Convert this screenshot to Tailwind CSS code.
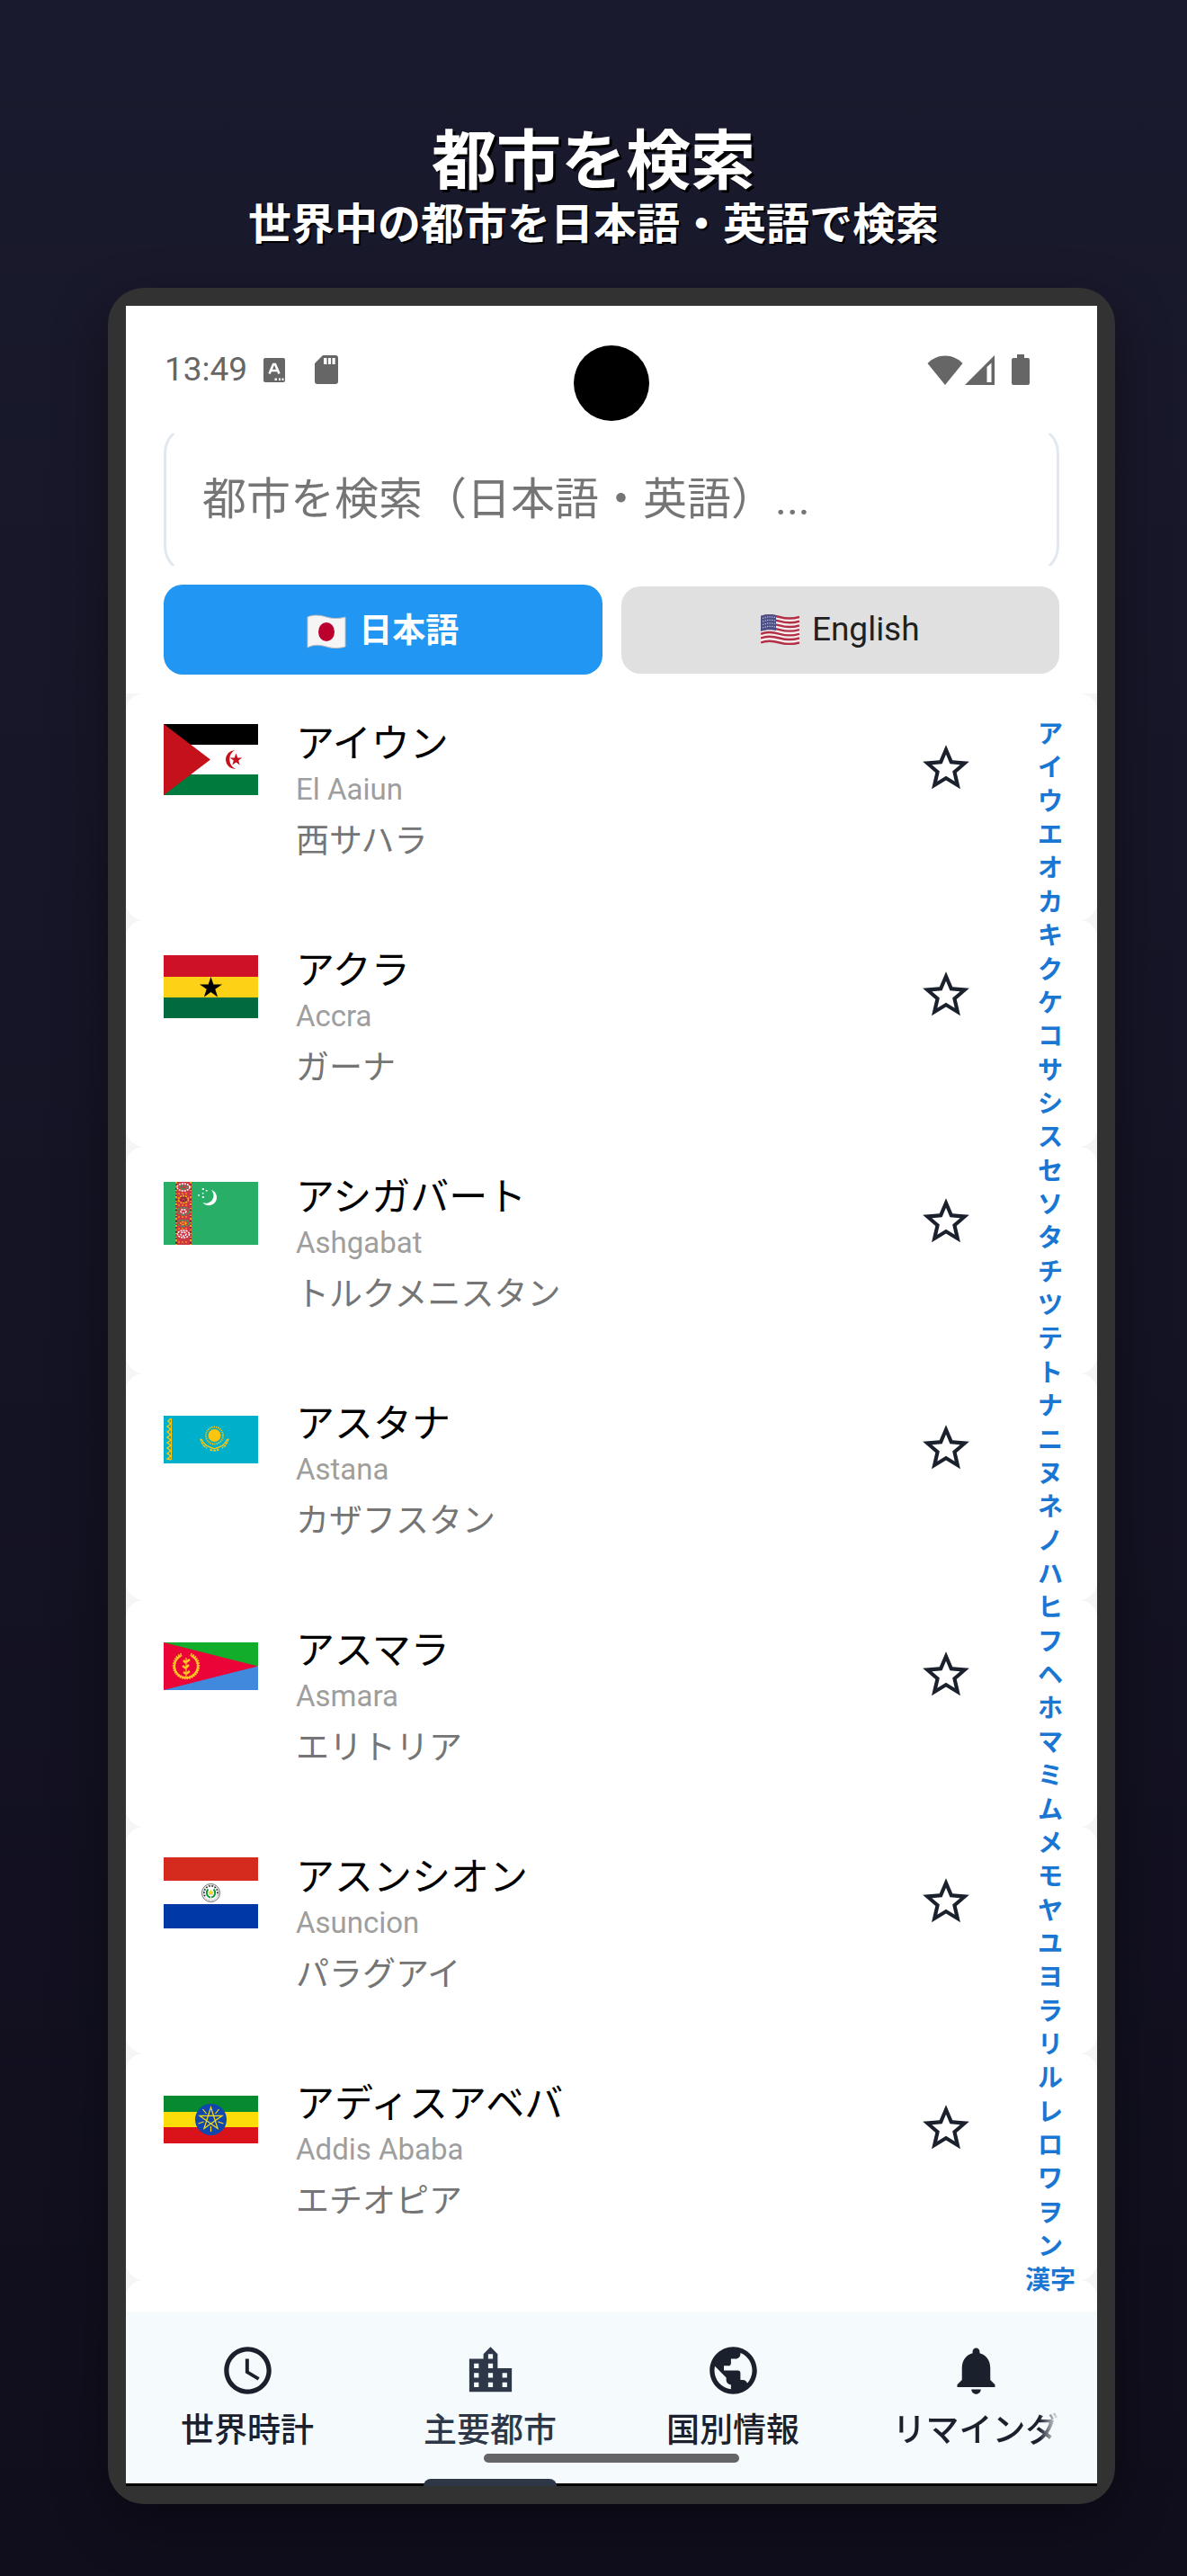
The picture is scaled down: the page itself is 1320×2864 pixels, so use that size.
<!DOCTYPE html>
<html lang="ja">
<head>
    <meta charset="UTF-8">
    <meta name="viewport" content="width=device-width, initial-scale=1.0">
    <title>都市を検索</title>
    <script src="https://cdn.jsdelivr.net/npm/@tailwindcss/browser@4"></script>
    <style>
        body {
            font-family: Roboto, 'Noto Sans CJK JP', sans-serif;
        }
    </style>
</head>
<body class="min-h-screen bg-linear-to-b from-[#1a1a2e] to-[#100e1c] pb-20">
    <header class="pt-[129px] text-center font-['Noto_Sans_CJK_JP',sans-serif] font-bold text-white">
        <h1 class="text-[72px] leading-[88px] [text-shadow:3px_3px_0_#000]">都市を検索</h1>
        <p class="text-5xl leading-[56px] [text-shadow:2px_2px_0_#000]">世界中の都市を日本語・英語で検索</p>
    </header>

    <!-- Phone -->
    <div class="mt-[47px] mr-20 ml-[120px] rounded-[40px] bg-[#323232] p-5 shadow-[0_20px_60px_rgba(0,0,0,0.4)]">
        <main class="relative bg-white">
            <!-- Status bar -->
            <div class="flex h-[142px] items-center pr-[75px] pl-[43px] text-[#666]">
                <span class="text-[37px] leading-10">13:49</span>
                <svg class="ml-[18px] h-[27px] w-6" viewBox="0 0 24 27" fill="currentColor">
                    <rect width="24" height="27" rx="2"/>
                    <path d="M6.500 17.500 11 7h2l4.500 10.500M8.500 14h7" fill="none" stroke="#fff" stroke-width="2.600"/>
                    <path d="M12.500 22.500h2.500v2.500h-2.500zM17 22.500h2v2.500h-2zM20.500 22.500h2v2.500h-2z" fill="#fff"/>
                </svg>
                <svg class="ml-[33px] h-8 w-[26px]" viewBox="0 0 26 32" fill="currentColor">
                    <path d="M9 0h14a3 3 0 0 1 3 3v26a3 3 0 0 1-3 3H3a3 3 0 0 1-3-3V9z"/>
                    <path d="M10 3h3.500v7H10zM15 3h3v7h-3zM19.500 3h3.200v7h-3.200z" fill="#fff"/>
                </svg>
                <svg class="ml-auto h-[33px] w-10" viewBox="0 0 40 33" fill="currentColor">
                    <path d="M20 33 .5 9C6 3.500 12.500.5 20 .5S34 3.500 39.500 9z"/>
                </svg>
                <svg class="ml-[2px] h-[33px] w-[33px]" viewBox="0 0 33 33" fill="currentColor">
                    <path d="M33 0v33H0z"/>
                    <path d="M24.500 13 29.500 8.500V30h-5z" fill="#fff"/>
                </svg>
                <svg class="ml-[19px] h-[34px] w-5" viewBox="0 0 20 34" fill="currentColor">
                    <path d="M6 0h8v4h4a2 2 0 0 1 2 2v26a2 2 0 0 1-2 2H2a2 2 0 0 1-2-2V6a2 2 0 0 1 2-2h4z"/>
                </svg>
            </div>
            <div class="absolute top-[44px] left-1/2 size-[84px] -translate-x-1/2 rounded-full bg-black"></div>

            <!-- Search -->
            <div class="mx-[42px] h-[147px] overflow-hidden">
                <input type="text" aria-label="都市を検索" placeholder="都市を検索（日本語・英語）..." class="-mt-[10px] block h-[167px] w-full rounded-[32px] border-3 border-[#e2e8f0] bg-white px-10 text-[49px] placeholder-[#757575] outline-none">
            </div>

            <!-- Language -->
            <div class="flex items-center gap-[21px] px-[42px] py-[21px]">
                <button type="button" class="flex h-[100px] flex-1 items-center justify-center gap-[14px] rounded-[21px] bg-[#2196f3] pt-1 text-[37px] font-bold text-white">
                    <svg class="h-10 w-11" viewBox="0 0 44 40">
                        <path d="M1 4c7-3 14-2 21 0s14 2 21 0v33c-7 2-14 2-21 0s-14-3-21 1z" fill="#f5f5f5" stroke="#bdbdbd"/>
                        <ellipse cx="22" cy="20.500" rx="9" ry="10.500" fill="#bc002d"/>
                    </svg>
                    日本語
                </button>
                <button type="button" class="flex h-[97px] flex-1 items-center justify-center gap-[14px] rounded-[21px] bg-[#e0e0e0] text-[37px] text-[#212121]">
                    <svg class="h-[34px] w-[43px]" viewBox="0 0 43 34">
                        <path d="M0 2c7-3 14-2 21 0s15 2 22 0v30c-7 2-14 2-22 0s-14-2-21 1z" fill="#f5eeee"/>
                        <g fill="none" stroke="#b22f45" stroke-width="2.400">
                            <path d="M0 3c7-3 14-2 21 0s15 2 22 0M0 7.700c7-3 14-2 21 0s15 2 22 0M0 12.400c7-3 14-2 21 0s15 2 22 0M0 17.100c7-3 14-2 21 0s15 2 22 0M0 21.800c7-3 14-2 21 0s15 2 22 0M0 26.500c7-3 14-2 21 0s15 2 22 0M0 31.500c7-3 14-2 21 0s15 2 22 0"/>
                        </g>
                        <path d="M0 2c6-2.500 11-2.300 17-1v17c-6-1.300-11-1-17 1z" fill="#4c4f86"/>
                        <path d="M2 4.500c5-2 9-2 14-1M2 8c5-2 9-2 14-1M2 11.500c5-2 9-2 14-1M2 15c5-2 9-2 14-1" fill="none" stroke="#c9cbe0" stroke-width="1.200" stroke-dasharray="1.200 1.400"/>
                    </svg>
                    English
                </button>
            </div>

            <!-- Cities -->
            <div class="relative bg-[#f5f5f5]">
                <ul id="city-list"></ul>
                <div class="h-[35px] rounded-t-[20px] bg-white"></div>
                <nav id="kana-index" class="absolute top-7 right-[22px] bottom-4 flex w-[60px] flex-col items-center justify-between text-[28px] leading-9 font-semibold text-[#1976d2]"></nav>
            </div>

            <!-- Tabs -->
            <nav class="relative border-b-3 border-black bg-[#f5fafd] text-[#1a202c]">
                <div class="grid grid-cols-4 pt-[34px] pb-[34px] text-[37px] leading-[48px] font-medium">
                    <a href="#" class="flex flex-col items-center gap-3">
                        <svg class="size-[63px]" viewBox="0 0 24 24" fill="currentColor"><path d="M11.990 2C6.470 2 2 6.480 2 12s4.470 10 9.990 10C17.520 22 22 17.520 22 12S17.520 2 11.990 2zM12 20c-4.420 0-8-3.580-8-8s3.580-8 8-8 8 3.580 8 8-3.580 8-8 8zM12.500 7H11v6l5.250 3.150.75-1.230-4.500-2.670z"/></svg>
                        <span>世界時計</span>
                    </a>
                    <a href="#" class="flex flex-col items-center gap-3 text-[#2d3748]">
                        <svg class="size-[63px]" viewBox="0 0 24 24" fill="currentColor"><path d="M15 11V5l-3-3-3 3v2H3v14h18V11h-6zm-8 8H5v-2h2v2zm0-4H5v-2h2v2zm0-4H5V9h2v2zm6 8h-2v-2h2v2zm0-4h-2v-2h2v2zm0-4h-2V9h2v2zm0-4h-2V5h2v2zm6 12h-2v-2h2v2zm0-4h-2v-2h2v2z"/></svg>
                        <span>主要都市</span>
                    </a>
                    <a href="#" class="flex flex-col items-center gap-3">
                        <svg class="size-[63px]" viewBox="0 0 24 24" fill="currentColor"><path d="M12 2C6.480 2 2 6.480 2 12s4.480 10 10 10 10-4.480 10-10S17.520 2 12 2zm-1 17.930c-3.950-.490-7-3.850-7-7.930 0-.620.080-1.210.210-1.790L9 15v1c0 1.100.9 2 2 2v1.930zm6.900-2.540c-.260-.810-1-1.390-1.900-1.390h-1v-3c0-.550-.450-1-1-1H8v-2h2c.550 0 1-.450 1-1V7h2c1.100 0 2-.9 2-2v-.410c2.930 1.190 5 4.060 5 7.410 0 2.080-.8 3.970-2.100 5.390z"/></svg>
                        <span>国別情報</span>
                    </a>
                    <a href="#" class="flex flex-col items-center gap-3">
                        <svg class="size-[63px]" viewBox="0 0 24 24" fill="currentColor"><path d="M12 22c1.100 0 2-.9 2-2h-4c0 1.100.890 2 2 2zm6-6v-5c0-3.070-1.640-5.640-4.500-6.320V4c0-.830-.670-1.500-1.500-1.500s-1.500.670-1.500 1.500v.680C7.630 5.360 6 7.920 6 11v5l-2 2v1h16v-1l-2-2z"/></svg>
                        <span class="[mask-image:linear-gradient(to_right,#000_88%,transparent)]">リマインダ</span>
                    </a>
                </div>
                <div class="absolute bottom-[23px] left-1/2 h-[10px] w-[284px] -translate-x-1/2 rounded-full bg-[#636567]"></div>
                <div class="absolute -bottom-[3px] left-[331px] h-2 w-[148px] rounded-t-[8px] bg-[#2d3748]"></div>
            </nav>
        </main>
    </div>

    <script>
        const cities = [
            {
                name: 'アイウン', english: 'El Aaiun', country: '西サハラ',
                flag: `<svg class="w-[105px]" viewBox="0 0 105 79">
                    <path d="M0 0h105v23H0z"/><path fill="#fff" d="M0 23h105v33H0z"/><path fill="#007a3d" d="M0 56h105v23H0z"/>
                    <path fill="#c4111b" d="m0 0 52 39.500L0 79zM79 29a10.500 10.500 0 1 0 1 21 12 12 0 0 1-1-21zM80.500 32.500l1.700 4.900h5.100l-4.100 3.100 1.500 5-4.200-3-4.200 3 1.500-5-4.100-3.100h5.100z"/>
                </svg>`
            },
            {
                name: 'アクラ', english: 'Accra', country: 'ガーナ',
                flag: `<svg class="w-[105px]" viewBox="0 0 105 70">
                    <path fill="#ce1126" d="M0 0h105v24H0z"/><path fill="#fcd116" d="M0 24h105v23H0z"/><path fill="#006b3f" d="M0 47h105v23H0z"/>
                    <path d="m52.500 24 2.900 8.500h9.600l-7.700 5.200 2.800 8.800-7.600-5.400-7.600 5.400 2.800-8.800-7.700-5.200h9.600z"/>
                </svg>`
            },
            {
                name: 'アシガバート', english: 'Ashgabat', country: 'トルクメニスタン',
                flag: `<svg class="w-[105px]" viewBox="0 0 105 70">
                    <path fill="#28ae66" d="M0 0h105v70H0z"/><path fill="#ca3745" d="M13 0h18v70H13z"/>
                    <g fill="none" stroke-width="1.500">
                        <path d="M14 0v70M30 0v70" stroke="#f8c300" stroke-dasharray="2 3 1 2"/>
                        <path d="M14 2v68M30 2v68" stroke="#5c2a30" stroke-dasharray="1 4 2 5"/>
                        <path d="M16 13h12M16 26h12M16 39h12M16 52h12M16 67h12" stroke="#ff8c1a" stroke-dasharray="2 2"/>
                        <g stroke-dasharray="2 1">
                            <ellipse cx="22" cy="6" rx="7" ry="4" stroke="#fff"/><ellipse cx="22" cy="6" rx="4" ry="2" stroke="#28ae66"/>
                            <ellipse cx="22" cy="19.500" rx="5.500" ry="4" stroke="#f8c300"/><ellipse cx="22" cy="19.500" rx="3" ry="2" stroke="#5c2a30"/>
                            <ellipse cx="22" cy="32.700" rx="6.500" ry="4" stroke="#28ae66"/><ellipse cx="22" cy="32.700" rx="3" ry="2" stroke="#fff"/>
                            <ellipse cx="22" cy="46" rx="6.500" ry="3.500" stroke="#28ae66"/><ellipse cx="22" cy="46" rx="3" ry="1.500" stroke="#f8c300"/>
                            <ellipse cx="22" cy="58" rx="6.500" ry="4" stroke="#fff"/><ellipse cx="22" cy="58" rx="3" ry="2" stroke="#fff"/>
                        </g>
                    </g>
                    <path fill="#fff" d="M53 9a8.800 8.800 0 1 1-9.500 14A8.600 8.600 0 0 0 53 9zM38.300 14h1.600v1.800h-1.600zM42.800 7h2v2h-2zM46.800 9h1.800v1.600h-1.800zM42.800 12h1.600v1.600h-1.600zM42.800 16h2v2h-2z"/>
                </svg>`
            },
            {
                name: 'アスタナ', english: 'Astana', country: 'カザフスタン',
                flag: `<svg class="w-[105px]" viewBox="0 0 105 53">
                    <path fill="#00afca" d="M0 0h105v53H0z"/>
                    <circle cx="56.500" cy="22" r="7" fill="#fec50c"/>
                    <g fill="none" stroke="#fec50c">
                        <circle cx="56.500" cy="22" r="9.500" stroke-width="2" stroke-dasharray="1.200 1.100"/>
                        <path d="M42 26c4 8 8 8.500 12 10 1.500.8 3.500.8 5 0 4-1.500 8-2 12-10" stroke-width="1.500"/>
                        <path d="M41 25.500c1 5 3.500 8.500 7 10.500M72 25.500c-1 5-3.500 8.500-7 10.500M51.500 37.500c3 1.800 7 1.800 10 0" stroke-width="1.500" stroke-dasharray="3 .8"/>
                        <path d="M8.500 3v46" stroke-width="1"/>
                        <path d="m8 3-3 3 3 3-4 3 4 3-4 3 4 3-4 3 4 3-4 3 4 3-4 3 4 3-4 3 4 3-4 3 4 1" stroke-width="1.500"/>
                    </g>
                </svg>`
            },
            {
                name: 'アスマラ', english: 'Asmara', country: 'エリトリア',
                flag: `<svg class="w-[105px]" viewBox="0 0 105 53">
                    <path fill="#12ad2b" d="M0 0h105v26.500H0z"/><path fill="#4189dd" d="M0 26.500h105V53H0z"/><path fill="#ea0437" d="m0 0 105 26.500L0 53z"/>
                    <g fill="none" stroke="#ffc726">
                        <path d="M19 15a13 13 0 1 0 12 0" stroke-width="2"/>
                        <path d="M20 13.500a13.500 13.500 0 1 0 10 0" stroke-width="3.500" stroke-dasharray="1.500 1"/>
                        <path d="M25 17v23" stroke-width="1.200"/>
                        <path d="M22 20l3 3M21 26l4 3M22 33l3 2M29 19l-4 3M28 25l-3 3M29 32l-4 3" stroke-width="2.500"/>
                    </g>
                </svg>`
            },
            {
                name: 'アスンシオン', english: 'Asuncion', country: 'パラグアイ',
                flag: `<svg class="w-[105px]" viewBox="0 0 105 79">
                    <path fill="#d52b1e" d="M0 0h105v26H0z"/><path fill="#fff" d="M0 26h105v26H0z"/><path fill="#0038a8" d="M0 52h105v27H0z"/>
                    <g fill="none">
                        <circle cx="52.500" cy="39.500" r="10" stroke="#666"/><circle cx="52.500" cy="39.500" r="8.200" stroke="#bbb" stroke-width=".8"/>
                        <path d="M46 43a7.500 7.500 0 1 1 13.500-1" stroke="#222" stroke-width="1.800" stroke-dasharray="1.500 1.800"/>
                        <path d="M49.500 35.500c-3 3-2 8 2.500 9M55.500 35.500c3 3 2 8-2.500 9" stroke="#009b3a" stroke-width="1.800"/>
                    </g>
                    <path fill="#fedf00" stroke="#c9a400" stroke-width=".4" d="m52.500 36.500.8 2.200h2l-1.600 1.300.6 2-1.800-1.200-1.800 1.200.6-2-1.600-1.300h2z"/>
                </svg>`
            },
            {
                name: 'アディスアベバ', english: 'Addis Ababa', country: 'エチオピア',
                flag: `<svg class="w-[105px]" viewBox="0 0 105 53">
                    <path fill="#078930" d="M0 0h105v18H0z"/><path fill="#fcdd09" d="M0 18h105v17H0z"/><path fill="#da121a" d="M0 35h105v18H0z"/>
                    <circle cx="52.500" cy="26.500" r="17.500" fill="#0f47af"/>
                    <g fill="none" stroke="#fcdd09" stroke-width="1.200">
                        <path d="m52.500 13 7.600 23.500L40 22.300h25L44.900 36.500z"/>
                        <path d="m57.500 20 4-5M47.500 20l-4-5M60.500 29l6 2M44.500 29l-6 2M52.500 34v6"/>
                    </g>
                </svg>`
            }
        ];

        document.getElementById('city-list').innerHTML = cities.map(city => `
            <li class="flex h-[252px] items-start gap-[42px] rounded-[20px] bg-white pt-[26px] pr-[137px] pl-[42px]">
                <div class="mt-2 flex h-[79px] items-center">${city.flag}</div>
                <div class="flex-1">
                    <h2 class="text-[43px] leading-[60px] text-black">${city.name}</h2>
                    <p class="text-[33px] leading-[42px] text-[#9e9e9e]">${city.english}</p>
                    <p class="mt-2 text-[37px] leading-[58px] text-[#757575]">${city.country}</p>
                </div>
                <button type="button" aria-label="${city.name}をお気に入りに追加" class="mt-[26px] text-[#1a202c]">
                    <svg class="size-[62px]" viewBox="0 0 24 24" fill="currentColor"><path d="M22 9.240l-7.190-.620L12 2 9.190 8.630 2 9.240l5.460 4.730L5.820 21 12 17.270 18.180 21l-1.630-7.030L22 9.240zM12 15.400l-3.760 2.270 1-4.280-3.320-2.880 4.380-.380L12 6.100l1.710 4.040 4.380.380-3.320 2.880 1 4.280L12 15.400z"/></svg>
                </button>
            </li>
        `).join('');

        const kana = [...'アイウエオカキクケコサシスセソタチツテトナニヌネノハヒフヘホマミムメモヤユヨラリルレロワヲン', '漢字'];
        document.getElementById('kana-index').innerHTML = kana.map(k => `<a href="#">${k}</a>`).join('');
    </script>
</body>
</html>
